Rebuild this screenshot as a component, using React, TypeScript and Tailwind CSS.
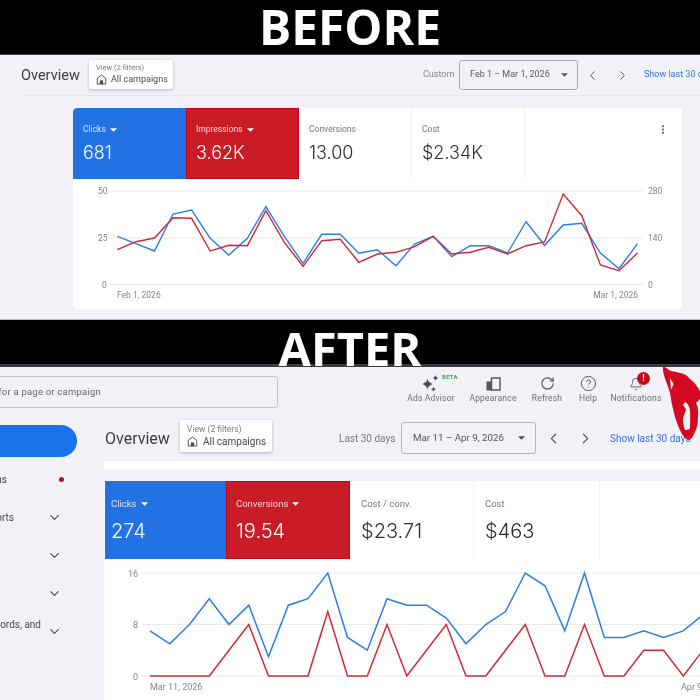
import { ChevronDown, ChevronLeft, ChevronRight, CircleHelp, Bell, RotateCw } from "lucide-react";

const roboto = "font-['Roboto',sans-serif]";
const inter = "font-['Inter',sans-serif]";

function line(values: number[], toX: (i: number) => number, toY: (v: number) => number) {
  return values.map((v, i) => `${toX(i).toFixed(1)},${toY(v).toFixed(1)}`).join(" ");
}

const beforeBlue = [184, 206, 228, 117, 105, 190, 240, 190, 95, 185, 265, 178, 178, 235, 224, 272, 207, 184, 245, 212, 212, 234, 140, 211, 150, 145, 234, 281, 206];
const beforeRed = [224, 200, 189, 128, 130, 228, 211, 212, 107, 203, 274, 197, 193, 262, 237, 232, 215, 184, 237, 232, 217, 237, 212, 201, 57, 122, 270, 287, 234];
const afterBlue = [7, 5, 8, 12, 8, 11, 3, 11, 12, 16, 6, 4, 12, 11, 11, 9, 5, 8, 10, 16, 14, 7, 16, 6, 6, 7, 6, 7, 9.5, 11];
const afterRed = [0, 0, 0, 0, 4, 8, 0, 0, 0, 10, 0, 0, 8, 0, 4, 8, 0, 0, 4, 8, 0, 0, 8, 0, 0, 4, 4, 0, 4, 6];

function Caret({ className }: { className: string }) {
  return (
    <svg width="7" height="4" viewBox="0 0 7 4" className={`shrink-0 ${className}`}>
      <path d="M0 0.3h7L3.5 3.8z" fill="currentColor" />
    </svg>
  );
}

function HomeIcon({ size }: { size: number }) {
  return (
    <svg width={size} height={size} viewBox="0 0 12 12" className="shrink-0 text-[#4a4a4f]">
      <path d="M6 1.2 1.4 4.6V11h9.2V4.6z" fill="none" stroke="currentColor" strokeWidth="1" />
      <rect x="4.2" y="7" width="3.6" height="4" fill="currentColor" />
    </svg>
  );
}

function ViewChip({ box, top, name, gap, size }: { box: string; top: string; name: string; gap: string; size: number }) {
  return (
    <div className={`flex flex-col justify-center rounded-[2px] bg-white shadow-[0_1px_3px_rgba(60,64,67,0.35)] ${box} ${roboto}`}>
      <div className={`leading-none text-[#7b7b80] ${top}`}>View (2 filters)</div>
      <div className={`flex items-center ${gap} ${name} leading-none text-[#47474c]`}>
        <HomeIcon size={size} />
        <span>All campaigns</span>
      </div>
    </div>
  );
}

function Tile({ box, label, value, labelSize, valueSize, caret }: { box: string; label: string; value: string; labelSize: string; valueSize: string; caret?: boolean }) {
  return (
    <div className={`flex shrink-0 flex-col justify-center ${box}`}>
      <div className={`flex items-center gap-[4px] leading-none ${labelSize} ${roboto}`}>
        <span>{label}</span>
        {caret && <Caret className="text-white" />}
      </div>
      <div className={`leading-none font-light ${valueSize} ${inter}`}>{value}</div>
    </div>
  );
}

function BeforeChart() {
  const x = (i: number) => 44.3 + 18.58 * i;
  const y = (z: number) => z / 3 - 4;
  return (
    <svg width="609" height="130" viewBox="0 0 609 130" className="block">
      {[12, 59, 105.5].map((g) => (
        <line key={g} x1="36" x2="570" y1={g} y2={g} stroke="#e9e9ee" strokeWidth="1" />
      ))}
      <g fill="#85858a" fontSize="8.5" fontFamily="Roboto, sans-serif">
        <text x="25" y="15">50</text>
        <text x="25" y="62">25</text>
        <text x="29" y="109">0</text>
        <text x="575" y="15">280</text>
        <text x="575" y="62">140</text>
        <text x="575" y="109">0</text>
        <text x="44" y="119">Feb 1, 2026</text>
        <text x="565" y="119" textAnchor="end">Mar 1, 2026</text>
      </g>
      <polyline points={line(beforeBlue, x, y)} fill="none" stroke="#2b7de9" strokeWidth="1.4" />
      <polyline points={line(beforeRed, x, y)} fill="none" stroke="#cf2a38" strokeWidth="1.4" />
    </svg>
  );
}

function AfterChart() {
  const x = (i: number) => 46 + 19.75 * i;
  const y = (v: number) => 117 - v * 6.44;
  return (
    <svg width="596" height="141" viewBox="0 0 596 141" className="block">
      {[14, 65.5, 117].map((g) => (
        <line key={g} x1="38" x2="596" y1={g} y2={g} stroke="#e9e9ee" strokeWidth="1.2" />
      ))}
      <g fill="#85858a" fontSize="9" fontFamily="Roboto, sans-serif">
        <text x="24" y="17.5">16</text>
        <text x="29" y="69">8</text>
        <text x="29" y="120.5">0</text>
        <text x="46" y="131">Mar 11, 2026</text>
        <text x="577" y="131">Apr 9, 2026</text>
      </g>
      <polyline points={line(afterBlue, x, y)} fill="none" stroke="#2b7de9" strokeWidth="1.5" />
      <polyline points={line(afterRed, x, y)} fill="none" stroke="#cf2a38" strokeWidth="1.5" />
    </svg>
  );
}

function Tool({ box, label, children }: { box: string; label: string; children: React.ReactNode }) {
  return (
    <div className={`relative flex shrink-0 flex-col items-center ${box}`}>
      <div className="flex h-[17px] items-center justify-center text-[#55555a]">{children}</div>
      <div className={`mt-[2px] text-[8.5px] leading-none tracking-[0.2px] whitespace-nowrap text-[#6c6c71] ${roboto}`}>{label}</div>
    </div>
  );
}

function NavRow({ pad, label, dot, chevron }: { pad?: string; label?: string; dot?: boolean; chevron?: boolean }) {
  return (
    <div className="flex h-[38px] items-center">
      <div className={`flex w-[47px] shrink-0 justify-end overflow-hidden ${pad ?? ""}`}>
        {label && <span className={`shrink-0 text-[10px] leading-[13px] whitespace-nowrap text-[#47474c] ${roboto}`}>{label}</span>}
      </div>
      {chevron && <ChevronDown size={15} strokeWidth={1.8} className="shrink-0 text-[#47474c]" />}
      {dot && <span className="ml-[12px] size-[5px] rounded-full bg-[#c5091a]" />}
    </div>
  );
}

export default function App() {
  return (
    <div className="relative flex h-[700px] w-[700px] flex-col overflow-hidden bg-black blur-[0.5px]">
      <div className="flex h-[55px] shrink-0 items-center justify-center border-b border-[#444] pb-[1px] font-['Open_Sans',sans-serif] text-[48px] leading-none font-bold text-white">
        BEFORE
      </div>

      <section className="flex h-[265px] shrink-0 flex-col overflow-hidden border-b border-[#bbb] bg-[#f1f1f7]">
        <div className="ml-[21px] flex h-[41px] shrink-0 items-center border-b border-[#e7e7ec] whitespace-nowrap">
          <div className={`w-[68px] shrink-0 pt-[3px] text-[14.5px] leading-none text-[#3c3c40] ${roboto}`}>Overview</div>
          <ViewChip box="mb-[2px] h-[29px] w-[84px] shrink-0 gap-[3px] pt-[1px] pl-[7px]" top="text-[7.5px]" name="text-[9px]" gap="gap-[4px]" size={11} />
          <div className={`ml-[250px] w-[36px] shrink-0 text-[9px] text-[#85858a] ${roboto}`}>Custom</div>
          <div className={`flex h-[30px] w-[119px] shrink-0 items-center justify-between rounded-[3px] border border-[#a9a9ae] pr-[9px] pl-[10px] text-[9px] text-[#5a5a5f] ${roboto}`}>
            <span>Feb 1 – Mar 1, 2026</span>
            <Caret className="text-[#55555a]" />
          </div>
          <ChevronLeft size={15} strokeWidth={1.6} className="ml-[7px] shrink-0 text-[#5a5a5f]" />
          <ChevronRight size={15} strokeWidth={1.6} className="ml-[15px] shrink-0 text-[#5a5a5f]" />
          <div className={`ml-[14px] shrink-0 text-[9px] text-[#3574e0] ${roboto}`}>Show last 30 days</div>
        </div>

        <div className="mt-[12px] ml-[73px] flex h-[201px] w-[609px] shrink-0 flex-col overflow-hidden rounded-[4px] bg-white">
          <div className="flex h-[71px] shrink-0 items-stretch">
            <Tile box="w-[113px] gap-[10px] rounded-tl-[4px] bg-[#2272e4] pl-[10px] text-white" label="Clicks" value="681" labelSize="text-[8.5px] text-[#d6e4fb]" valueSize="text-[18px]" caret />
            <Tile box="w-[113px] gap-[10px] border border-[#c4041a] bg-[#ca1c26] pl-[9px] text-white" label="Impressions" value="3.62K" labelSize="text-[8.5px] text-[#f8d5d7]" valueSize="text-[18px]" caret />
            <Tile box="w-[113px] gap-[10px] border-r border-[#f1f1f5] pl-[10px] text-[#2d2d30]" label="Conversions" value="13.00" labelSize="text-[8.5px] text-[#77777c]" valueSize="text-[18px]" />
            <Tile box="w-[113px] gap-[10px] border-r border-[#f1f1f5] pl-[10px] text-[#2d2d30]" label="Cost" value="$2.34K" labelSize="text-[8.5px] text-[#77777c]" valueSize="text-[18px]" />
            <div className="flex flex-1 justify-end pt-[17px] pr-[17px]">
              <svg width="4" height="9" viewBox="0 0 4 9">
                <circle cx="2" cy="1.2" r="1" fill="#4a4a4f" />
                <circle cx="2" cy="4.5" r="1" fill="#4a4a4f" />
                <circle cx="2" cy="7.8" r="1" fill="#4a4a4f" />
              </svg>
            </div>
          </div>
          <BeforeChart />
        </div>
      </section>

      <div className="flex h-[47px] shrink-0 items-start justify-center border-b-[3px] border-[#3c3c40] pt-[5px] font-['Open_Sans',sans-serif] text-[47px] leading-[47px] font-bold text-white">
        AFTER
      </div>

      <section className="flex min-h-0 flex-1 flex-col overflow-hidden bg-[#f1f1f7]">
        <div className="flex h-[50px] shrink-0 items-start">
          <div className={`mt-[9px] flex h-[32px] w-[278px] shrink-0 items-center justify-end overflow-hidden rounded-r-[3px] border border-l-0 border-[#c4c4c9] pt-[1px] pr-[176px] text-[9.5px] tracking-[0.22px] whitespace-nowrap text-[#66666b] ${roboto}`}>
            <span className="shrink-0">Search for a page or campaign</span>
          </div>
          <div className="mt-[8px] ml-[122px] flex">
            <Tool box="w-[62px]" label="Ads Advisor">
              <svg width="20" height="17" viewBox="0 0 20 17">
                <path d="M6.5 3.5C7 6 8 7.5 11.5 9 8 10.500 7 12 6.500 14.500 6 12 5 10.500 1.500 9 5 7.500 6 6 6.500 3.500Z" fill="#4f4f54" />
                <path d="M14.500 0C14.800 1.500 15.500 2.200 17.500 3 15.500 3.800 14.800 4.500 14.500 6 14.200 4.500 13.500 3.800 11.500 3 13.500 2.200 14.200 1.500 14.500 0Z" fill="#4f4f54" />
                <path d="M12.500 11.500C12.800 13 13.300 13.500 15 14.200 13.300 14.900 12.800 15.500 12.500 17 12.200 15.500 11.700 14.900 10 14.200 11.700 13.500 12.200 13 12.500 11.500Z" fill="#4f4f54" />
              </svg>
              <span className={`absolute -top-[2px] left-[41px] bg-[#eef6ee] px-[1px] text-[6px] leading-[7px] font-bold tracking-[0.3px] text-[#3aa356] ${roboto}`}>BETA</span>
            </Tool>
            <Tool box="w-[62px]" label="Appearance">
              <svg width="15" height="14" viewBox="0 0 15 14">
                <path d="M5.500 1h8.500v12H5.500z" fill="none" stroke="currentColor" strokeWidth="1.400" />
                <rect x="0.500" y="4.500" width="5.500" height="9" fill="currentColor" />
              </svg>
            </Tool>
            <Tool box="w-[46px]" label="Refresh">
              <RotateCw size={15} strokeWidth={1.8} />
            </Tool>
            <Tool box="w-[36px]" label="Help">
              <CircleHelp size={17} strokeWidth={1.4} />
            </Tool>
            <Tool box="w-[60px]" label="Notifications">
              <Bell size={14} strokeWidth={1.5} />
              <span className={`absolute -top-[3px] left-[31px] flex size-[13px] items-center justify-center rounded-full bg-[#c5091a] text-[9px] font-bold text-white ${roboto}`}>!</span>
            </Tool>
          </div>
        </div>

        <div className="flex min-h-0 flex-1">
          <nav className="w-[104px] shrink-0 pt-[8px]">
            <div className="h-[32px] w-[77px] rounded-r-full bg-[#1a73e8]" />
            <div className="pt-[3px]">
              <NavRow pad="pr-[40px]" label="Recommendations" dot />
              <NavRow pad="pr-[33px]" label="Insights and reports" chevron />
              <NavRow chevron />
              <NavRow chevron />
              <NavRow pad="-translate-y-[7px] pr-[6px]" label="Audiences, keywords, and" chevron />
            </div>
          </nav>

          <main className="flex min-w-0 flex-1 flex-col">
            <div className="flex h-[42px] shrink-0 items-center whitespace-nowrap">
              <div className={`ml-[1px] w-[75px] shrink-0 pt-[1px] text-[16px] leading-none text-[#3c3c40] ${roboto}`}>Overview</div>
              <ViewChip box="mb-[4px] h-[32px] w-[92px] shrink-0 gap-[3px] pl-[7px]" top="text-[8.5px]" name="text-[10px]" gap="gap-[5px]" size={11} />
              <div className={`ml-[67px] w-[62px] shrink-0 text-[10px] text-[#77777c] ${roboto}`}>Last 30 days</div>
              <div className={`flex h-[32px] w-[135px] shrink-0 items-center justify-between rounded-[3px] border border-[#b5b5ba] pr-[10px] pl-[11px] text-[9.75px] text-[#55555a] ${roboto}`}>
                <span>Mar 11 – Apr 9, 2026</span>
                <Caret className="text-[#4a4a4f]" />
              </div>
              <ChevronLeft size={17} strokeWidth={1.7} className="ml-[9px] shrink-0 text-[#5a5a5f]" />
              <ChevronRight size={17} strokeWidth={1.7} className="ml-[15px] shrink-0 text-[#5a5a5f]" />
              <div className={`ml-[16px] shrink-0 text-[10px] text-[#3574e0] ${roboto}`}>Show last 30 days</div>
            </div>
            <div className="mt-[2px] h-[8px] shrink-0 bg-white" />
            <div className="mt-[12px] flex flex-1 flex-col bg-white">
              <div className="flex h-[78px] shrink-0 items-stretch">
                <Tile box="ml-[1px] w-[121px] gap-[12px] bg-[#2272e4] pl-[6px] text-white" label="Clicks" value="274" labelSize="text-[9.5px] text-[#d6e4fb]" valueSize="text-[20px]" caret />
                <Tile box="w-[124px] gap-[12px] border border-[#c4041a] bg-[#ca1c26] pl-[9px] text-white" label="Conversions" value="19.54" labelSize="text-[9.5px] text-[#f8d5d7]" valueSize="text-[20px]" caret />
                <Tile box="w-[124px] gap-[12px] border-r border-[#f1f1f5] pl-[11px] text-[#2d2d30]" label="Cost / conv." value="$23.71" labelSize="text-[9.5px] text-[#77777c]" valueSize="text-[20px]" />
                <Tile box="w-[126px] gap-[12px] border-r border-[#f1f1f5] pl-[11px] text-[#2d2d30]" label="Cost" value="$463" labelSize="text-[9.5px] text-[#77777c]" valueSize="text-[20px]" />
              </div>
              <AfterChart />
            </div>
          </main>
        </div>
      </section>

      <svg width="40" height="78" viewBox="0 0 40 78" className="pointer-events-none absolute top-[365px] left-[661px]">
        <path
          fillRule="evenodd"
          d="M2 2 C4 1 6 4 8 5 C11 7 13 6 15 7 C19 8 24 8 28 13 C31 16 33 17 35 20 C38 24 40 27 40 33 L35 38 C38 43 37 48 37 52 C37 58 36 63 34 67 C32 72 30 75 27 75 C24 74 23 72 21 69 C18 64 16 58 14 52 C12 44 10 36 9 28 C7 19 1 9 2 2 Z M9 13 L10 25 L12.500 19 Z M22 40 C23 42 25 43 25 45 C24 48 22 51 22 55 C22 59 23 62 24 65 C26 65 28 65 29 63 C29 58 29.500 52 29 46 C28.500 42 27 38 24 37 Z"
          fill="#d40a22"
        />
      </svg>
    </div>
  );
}
